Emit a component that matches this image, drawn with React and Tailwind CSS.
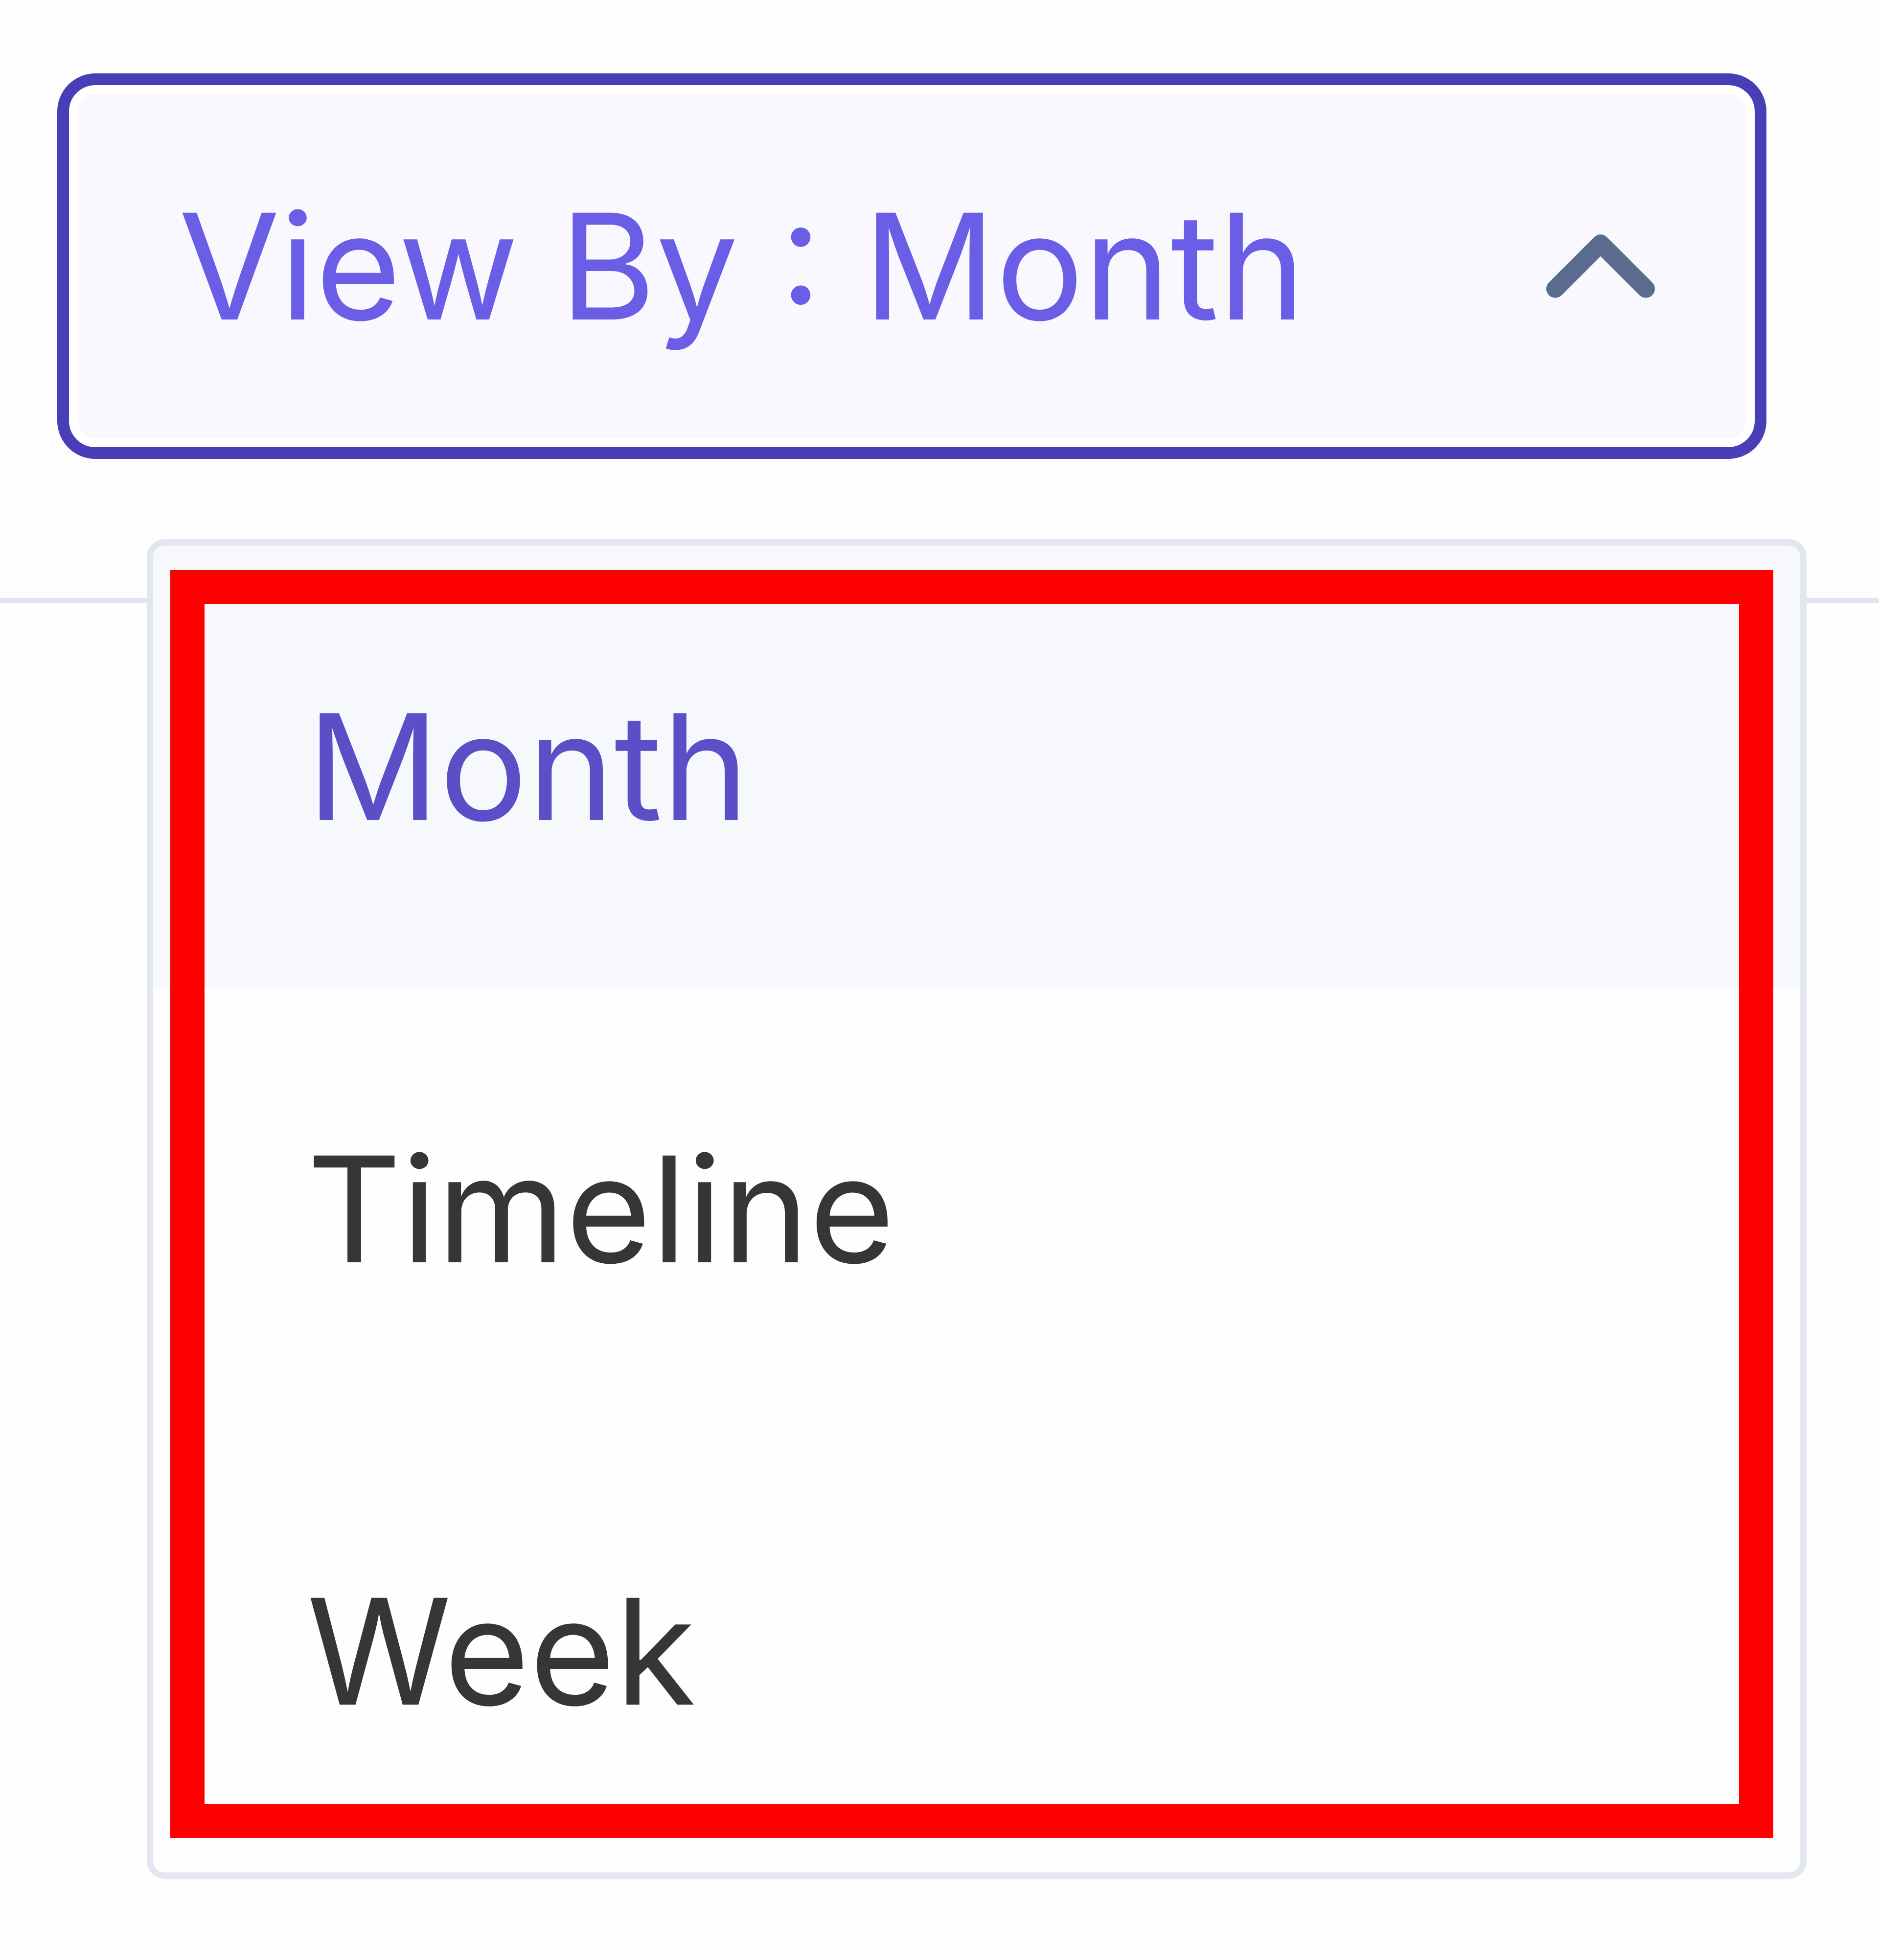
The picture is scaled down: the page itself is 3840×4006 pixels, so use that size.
import React from "react"
import { ChevronUp } from "lucide-react"

const options = [
    { label: "Month", active: true },
    { label: "Timeline", active: false },
    { label: "Week", active: false },
]

const App = () => {
    return (
        <div className="min-h-[4006px] w-[3840px] bg-[#fefefe] font-['Inter','Noto_Sans',sans-serif]">

            <div className="pl-[117px] pt-[150px]">
                <div className="relative w-[3493px]">

                    <button className="flex h-[788px] w-full items-center justify-between rounded-[78px] border-[24px] border-[#4a3eb6] bg-[#f8f8fe] pl-[224px] pr-[130px] shadow-[inset_0_0_0_18px_#ffffff] focus:outline-none">
                        <span className="text-[300px] font-normal leading-none text-[#6a5ee6]">
                            View By : Month
                        </span>
                        <ChevronUp size={370} strokeWidth={2.4} color="#5b6b8f" />
                    </button>

                    {/* open menu */}
                    <div className="absolute left-[183px] top-[952px] z-10 w-[3392px] overflow-hidden rounded-[36px] border-[13px] border-[#e1e6f0] bg-[#fdfdfe]">
                        {options.map(opt => (
                            <div
                                key={opt.label}
                                className={opt.active
                                    ? "flex h-[904px] items-center bg-[#f7f8fc] pl-[314px] text-[300px] leading-none text-[#5a4fc6]"
                                    : "flex h-[904px] items-center bg-[#fefefe] pl-[314px] text-[300px] leading-none text-[#363636]"}
                            >
                                {opt.label}
                            </div>
                        ))}

                        {/* red highlight frame drawn over the list */}
                        <div className="pointer-events-none absolute bottom-[70px] left-[35px] right-[55px] top-[50px] border-[70px] border-[#ff0000]" />
                    </div>
                </div>
            </div>

            <div className="mt-[284px] h-[10px] w-full bg-[#dfe4ee]" />
        </div>
    )
}

export default App
